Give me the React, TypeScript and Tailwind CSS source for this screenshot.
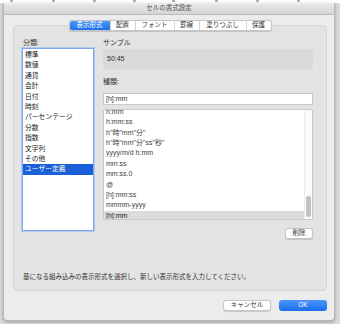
const categories = [
  "標準",
  "数値",
  "通貨",
  "会計",
  "日付",
  "時刻",
  "パーセンテージ",
  "分数",
  "指数",
  "文字列",
  "その他",
  "ユーザー定義",
];

const formats = [
  "h:mm",
  "h:mm:ss",
  'h"時"mm"分"',
  'h"時"mm"分"ss"秒"',
  "yyyy/m/d h:mm",
  "mm:ss",
  "mm:ss.0",
  "@",
  "[h]:mm:ss",
  "mmmm-yyyy",
  "[h]:mm",
];

const tabs = [
  { label: "表示形式", w: "w-[40px]" },
  { label: "配置", w: "w-[25px]" },
  { label: "フォント", w: "w-[39px]" },
  { label: "罫線", w: "w-[25px]" },
  { label: "塗りつぶし", w: "w-[47px]" },
  { label: "保護", w: "w-[25px]" },
];

const ticks = [10, 52, 93, 133, 172, 215, 256, 297];

export default function App() {
  return (
    <div className="w-[340px] h-[324px] bg-[#d9d9d9] overflow-hidden font-['Liberation_Sans','Noto_Sans_CJK_JP',sans-serif] text-[#333]">
      {/* spreadsheet behind the sheet */}
      <div className="h-[3px] bg-white flex">
        {ticks.map((x, i) => (
          <span
            key={i}
            className="w-[3px] h-[2px] bg-[#b0b0b0]"
            style={{ marginLeft: i === 0 ? x : x - ticks[i - 1] - 3 }}
          />
        ))}
      </div>

      <div className="ml-[3px] w-[332px] h-[318px] bg-[#ececec] border border-[#b8b8b8] border-t-0 rounded-b-[4px] shadow-[0_1px_3px_rgba(0,0,0,0.3)] flex flex-col">
        <div className="h-[12px] bg-gradient-to-b from-[#ebebeb] to-[#d4d4d4] border-b border-[#bdbdbd] flex items-center justify-center text-[6.5px] text-[#4a4a4a] leading-none">
          セルの書式設定
        </div>

        <div className="relative ml-[9px] mr-[7px] mt-[10px] h-[266px] bg-[#e3e3e3] border border-[#d5d5d5] rounded-[4px] flex flex-col">
          <div className="absolute -top-[6px] left-0 right-0 flex justify-center">
            <div className="flex h-[11px] bg-white border border-[#c6c6c6] rounded-[3px] overflow-hidden shadow-[0_0.5px_1px_rgba(0,0,0,0.15)]">
              {tabs.map((t, i) => (
                <div
                  key={t.label}
                  className={`${t.w} flex items-center justify-center text-[6.5px] leading-none ${
                    i === 0
                      ? "bg-gradient-to-b from-[#4d98f8] to-[#1c6fee] text-white"
                      : "text-[#333] border-l border-[#d3d3d3]"
                  }`}
                >
                  {t.label}
                </div>
              ))}
            </div>
          </div>

          <div className="flex pt-[12px] pl-[8px] gap-[9px]">
            <div className="w-[72px] flex flex-col">
              <div className="h-[10px] text-[7px] leading-[10px] pl-[1px]">分類:</div>
              <div className="h-[183px] bg-white border border-[#7aa6f2] shadow-[0_0_0_1px_rgba(122,166,242,0.45)] pt-[1px]">
                {categories.map((c, i) => (
                  <div
                    key={c}
                    className={`h-[10.4px] leading-[10.4px] pl-[2px] text-[6.8px] ${
                      i === categories.length - 1 ? "bg-[#1a5fd6] text-white" : "text-[#222]"
                    }`}
                  >
                    {c}
                  </div>
                ))}
              </div>
            </div>

            <div className="w-[210px] flex flex-col">
              <div className="h-[10px] text-[7px] leading-[10px]">サンプル</div>
              <div className="mt-[1px] h-[20px] bg-[#d9d9d9] rounded-[3px] flex items-center pl-[4px] text-[7px]">
                50:45
              </div>

              <div className="mt-[8px] h-[10px] text-[7px] leading-[10px]">種類:</div>
              <div className="mt-[6px] h-[12px] bg-white border border-[#c9c9c9] flex items-center pl-[2px] text-[7px]">
                [h]:mm
              </div>

              <div className="mt-[4px] h-[111px] bg-white border border-[#c9c9c9] flex overflow-hidden">
                <div className="flex-1 overflow-hidden">
                  <div className="-mt-[3.2px]">
                    {formats.map((f, i) => (
                      <div
                        key={f}
                        className={`h-[10.4px] leading-[10.4px] pl-[2px] text-[7px] ${
                          i === formats.length - 1 ? "bg-[#dcdcdc] text-[#222]" : "text-[#3d3d3d]"
                        }`}
                      >
                        {f}
                      </div>
                    ))}
                  </div>
                </div>
                <div className="w-[8px] border-l border-[#ececec] bg-[#fafafa] flex justify-center">
                  <div className="mt-[86px] w-[5px] h-[21px] rounded-full bg-[#c2c2c2]" />
                </div>
              </div>

              <div className="self-end mt-[8px] w-[28px] h-[11px] bg-white border border-[#c6c6c6] rounded-[3px] shadow-[0_0.5px_1px_rgba(0,0,0,0.15)] flex items-center justify-center text-[6.5px] leading-none">
                削除
              </div>
            </div>
          </div>

          <div className="flex-1" />
          <div className="pl-[9px] pb-[8px] text-[6.5px] leading-[10px] text-[#333]">
            基になる組み込みの表示形式を選択し、新しい表示形式を入力してください。
          </div>
        </div>

        <div className="mt-[9px] mr-[7px] flex justify-end gap-[8px]">
          <div className="w-[48px] h-[11px] bg-white border border-[#c6c6c6] rounded-[3px] shadow-[0_0.5px_1px_rgba(0,0,0,0.15)] flex items-center justify-center text-[6.5px] leading-none">
            キャンセル
          </div>
          <div className="w-[48px] h-[11px] bg-gradient-to-b from-[#4a95f8] to-[#1a6cee] rounded-[3px] flex items-center justify-center text-[6.5px] leading-none text-white">
            OK
          </div>
        </div>
      </div>
    </div>
  );
}
